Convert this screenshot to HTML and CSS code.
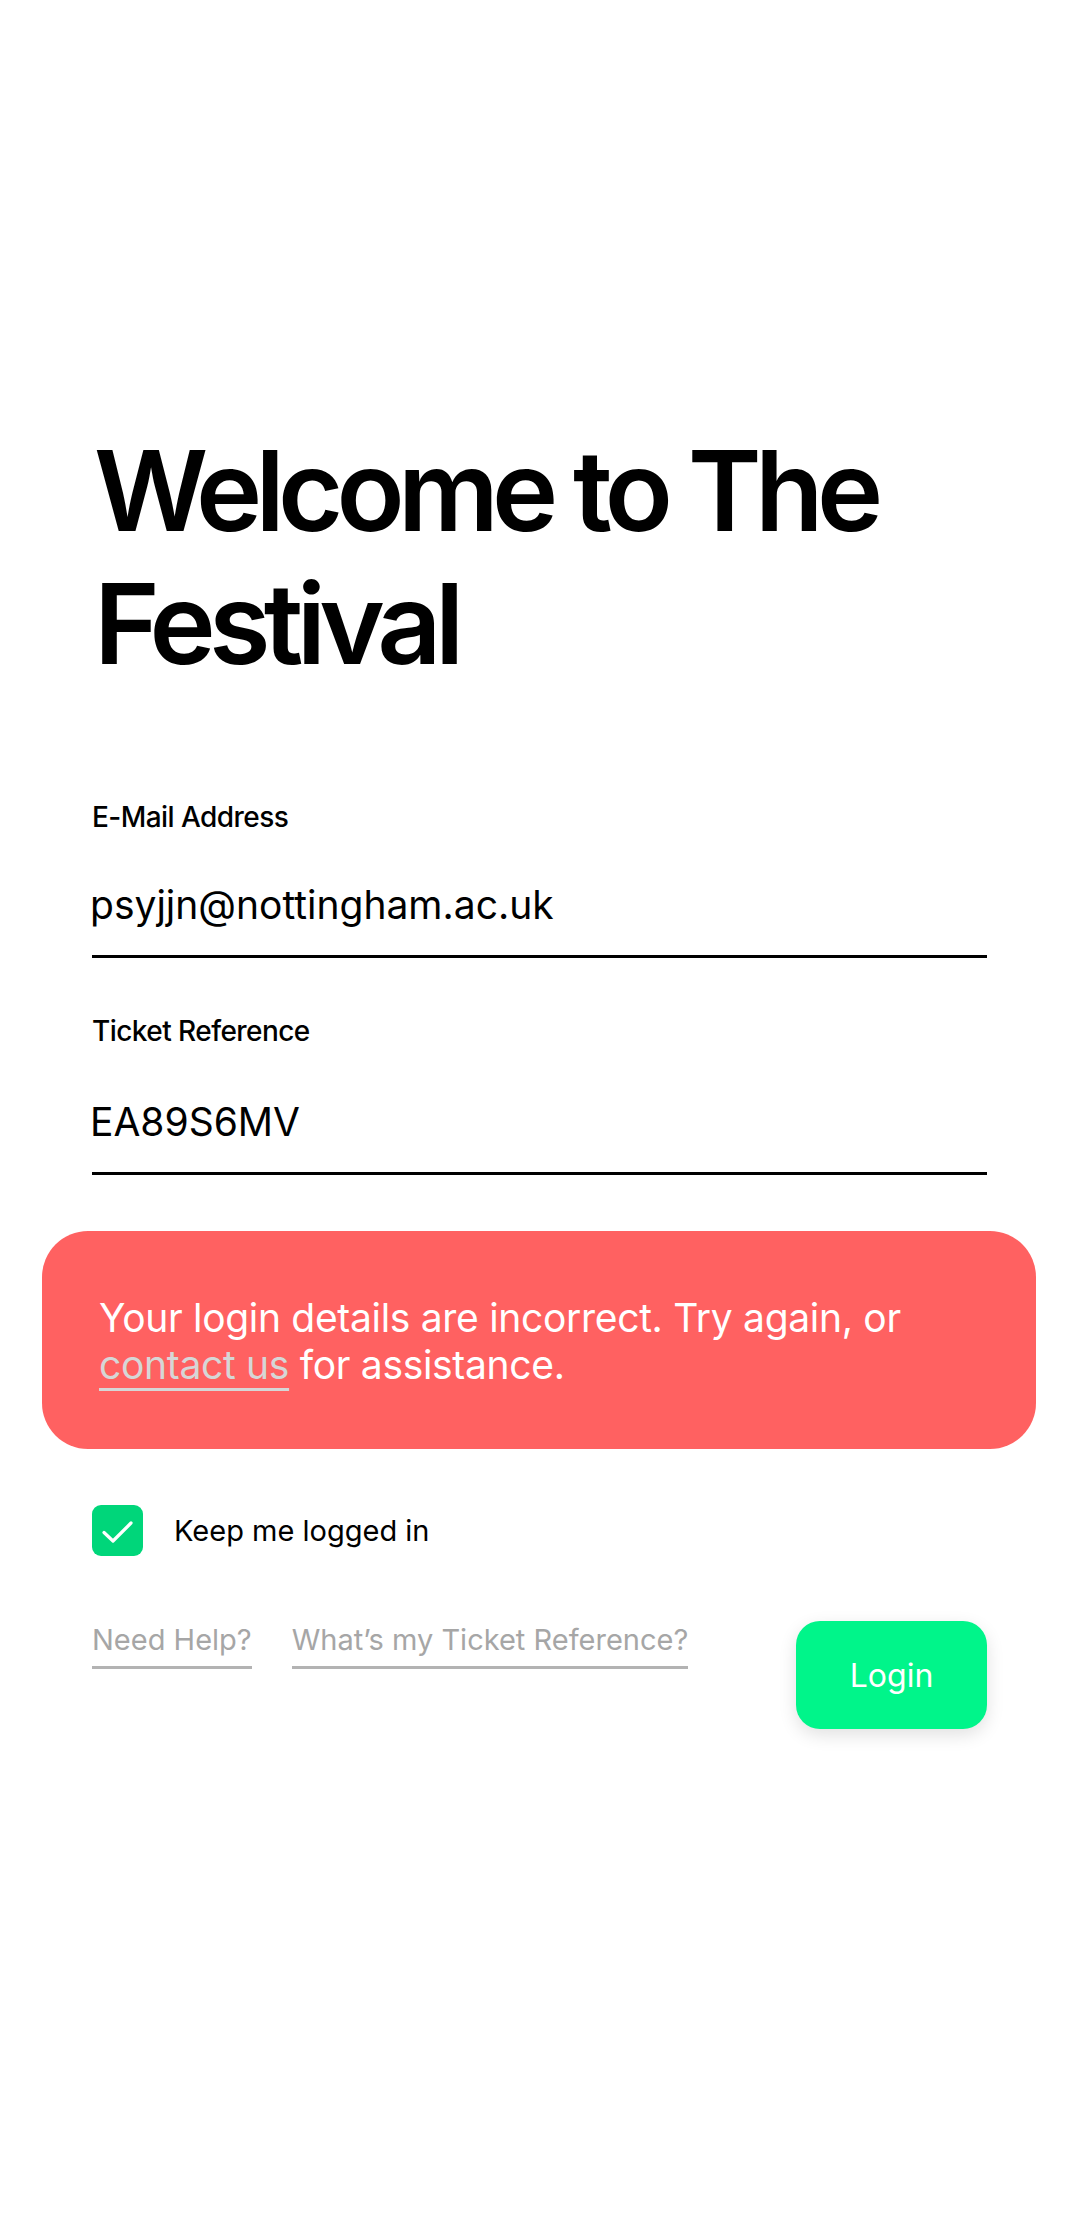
FILE: index.html
```html
<!DOCTYPE html>
<html lang="en">
<head>
<meta charset="utf-8">
<title>Welcome to The Festival</title>
<link rel="stylesheet" href="styles.css">
</head>
<body>
<main class="screen">
  <h1 class="title">Welcome to The<br>Festival</h1>

  <form class="form">
    <div class="field">
      <div class="label">E-Mail Address</div>
      <div class="value">psyjjn@nottingham.ac.uk</div>
    </div>
    <div class="field field-second">
      <div class="label">Ticket Reference</div>
      <div class="value">EA89S6MV</div>
    </div>
  </form>

  <div class="alert">
    <p class="alert-text">Your login details are incorrect. Try again, or <span class="alert-link">contact us</span> for assistance.</p>
  </div>

  <div class="remember">
    <span class="checkbox">
      <svg viewBox="0 0 51 51" width="51" height="51" aria-hidden="true">
        <path d="M12 27.5 L21 36 L39 18" fill="none" stroke="#ffffff" stroke-width="3.2" stroke-linecap="round" stroke-linejoin="round"/>
      </svg>
    </span>
    <span class="remember-text">Keep me logged in</span>
  </div>

  <div class="actions">
    <div class="links">
      <span class="link">Need Help?</span>
      <span class="link">What’s my Ticket Reference?</span>
    </div>
    <button class="login" type="button">Login</button>
  </div>
</main>
</body>
</html>
```

FILE: styles.css
```css
* {
  box-sizing: border-box;
}

html, body {
  margin: 0;
  padding: 0;
  background: #ffffff;
}

body {
  width: 1080px;
  min-height: 2220px;
  font-family: "Inter", "Noto Sans", "Liberation Sans", sans-serif;
  color: #000000;
}

.screen {
  padding: 424px 93px 0 92px;
}

.title {
  margin: 0;
  font-size: 112px;
  line-height: 133px;
  font-weight: 600;
  letter-spacing: -0.06em;
  margin-left: 2px;
}

.form {
  margin-top: 109px;
}

.field {
  display: flex;
  flex-direction: column;
  gap: 46px;
  padding-bottom: 26px;
  border-bottom: 3px solid #000000;
}

.field-second {
  margin-top: 55px;
  gap: 49px;
}

.label {
  font-size: 28px;
  line-height: 36px;
  font-weight: 500;
  letter-spacing: -0.02em;
}

.value {
  font-size: 39px;
  line-height: 48px;
  font-weight: 400;
  letter-spacing: 0;
  margin-left: -2px;
}

.alert {
  margin: 56px -49px 0 -50px;
  background: #ff6161;
  border-radius: 46px;
  padding: 63px 80px 61px 57px;
}

.alert-text {
  margin: 0;
  color: #ffffff;
  font-size: 39px;
  line-height: 47px;
  letter-spacing: -0.008em;
}

.alert-link {
  color: #d6d6d6;
  text-decoration: underline;
  text-decoration-color: #d6d6d6;
  text-decoration-thickness: 3px;
  text-underline-offset: 9px;
}

.remember {
  margin-top: 56px;
  display: flex;
  align-items: center;
  gap: 31px;
}

.checkbox {
  width: 51px;
  height: 51px;
  border-radius: 9px;
  background: #00d67a;
  display: flex;
}

.remember-text {
  font-size: 29px;
  line-height: 36px;
  letter-spacing: 0;
}

.actions {
  margin-top: 65px;
  display: flex;
  justify-content: space-between;
  align-items: flex-start;
}

.links {
  display: flex;
  gap: 40px;
}

.link {
  font-size: 29px;
  line-height: 38px;
  color: #a6a6a6;
  padding-bottom: 7px;
  border-bottom: 3px solid #b3b3b3;
  letter-spacing: 0;
}

.login {
  width: 191px;
  height: 108px;
  border: none;
  border-radius: 24px;
  background: #00f58a;
  color: #ffffff;
  font-family: "Inter", "Noto Sans", "Liberation Sans", sans-serif;
  font-size: 32px;
  font-weight: 400;
  box-shadow: 0 6px 18px rgba(0, 0, 0, 0.12);
  cursor: pointer;
}
```
